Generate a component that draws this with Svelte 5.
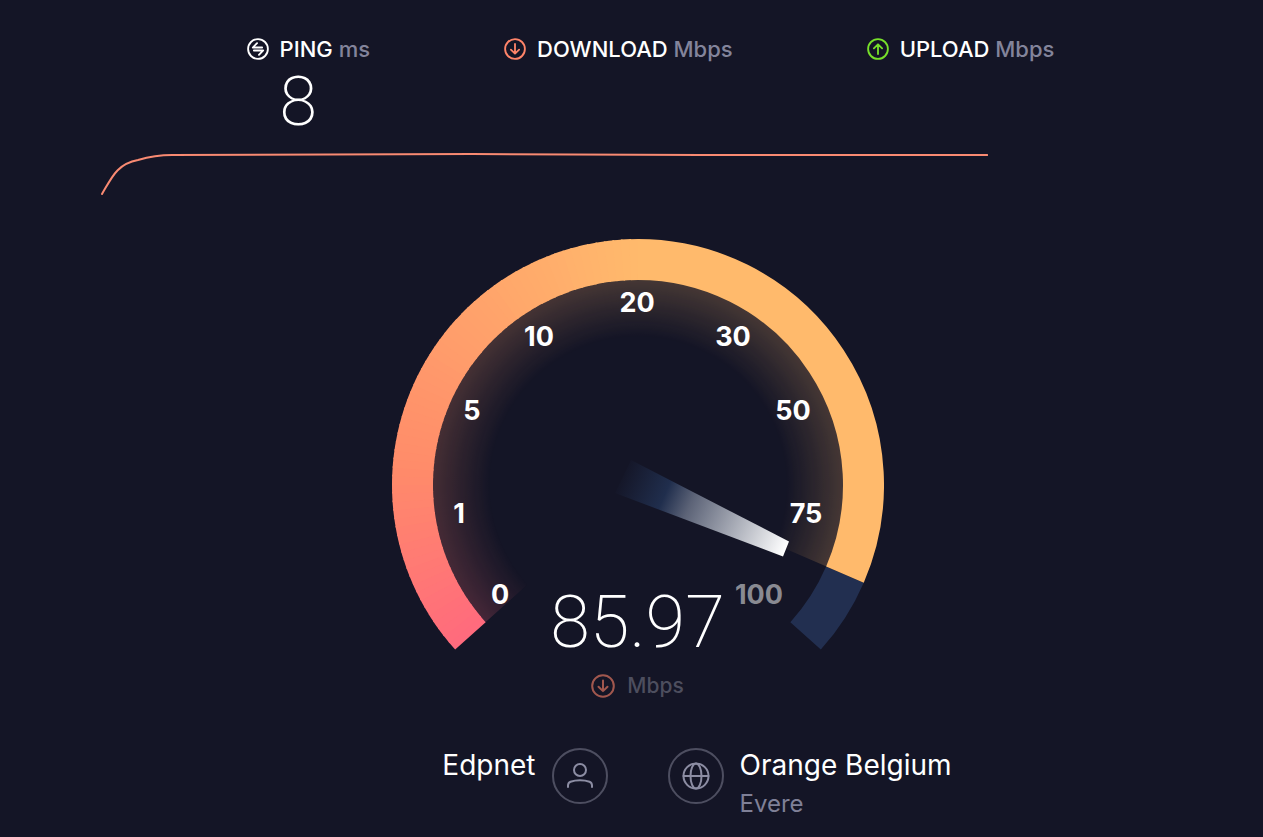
<script>
	const CX = 246;
	const CY = 246;
	const START = 138;
	const NEEDLE = 383.4;
	const END = 402;

	const stats = [
		{ id: 'ping', name: 'PING', unit: 'ms', value: '8', icon: 'ping' },
		{ id: 'download', name: 'DOWNLOAD', unit: 'Mbps', value: '', icon: 'down' },
		{ id: 'upload', name: 'UPLOAD', unit: 'Mbps', value: '', icon: 'up' }
	];

	const ticks = [
		{ label: '0', x: 108, y: 365 },
		{ label: '1', x: 67, y: 284 },
		{ label: '5', x: 80, y: 181 },
		{ label: '10', x: 147, y: 107 },
		{ label: '20', x: 245, y: 73 },
		{ label: '30', x: 341, y: 107 },
		{ label: '50', x: 401, y: 181 },
		{ label: '75', x: 414, y: 284 },
		{ label: '100', x: 367, y: 365, off: true }
	];

	// colour stops by angle, clockwise from the gauge's start
	const stops = [
		{ at: 138, rgb: [255, 106, 125] },
		{ at: 184, rgb: [255, 139, 106] },
		{ at: 225, rgb: [255, 161, 107] },
		{ at: 270, rgb: [255, 186, 108] }
	];

	function colorAt(angle) {
		for (let i = 1; i < stops.length; i++) {
			const a = stops[i - 1];
			const b = stops[i];
			if (angle <= b.at) {
				const t = (angle - a.at) / (b.at - a.at);
				return `rgb(${a.rgb.map((c, k) => Math.round(c + (b.rgb[k] - c) * t)).join(',')})`;
			}
		}
		return 'rgb(255,186,108)';
	}

	function point(angle, r) {
		const rad = (angle * Math.PI) / 180;
		return `${(CX + r * Math.cos(rad)).toFixed(2)} ${(CY + r * Math.sin(rad)).toFixed(2)}`;
	}

	function arc(from, to, r) {
		return `M${point(from, r)} A${r} ${r} 0 ${to - from > 180 ? 1 : 0} 1 ${point(to, r)}`;
	}

	// short arcs up to the top, then one solid arc to the needle
	const slices = [];
	for (let a = START; a < 270; a += 2) {
		slices.push({ from: a, to: a + 2.4, color: colorAt(a + 1) });
	}
	slices.push({ from: 270, to: NEEDLE, color: colorAt(270) });
</script>

{#snippet icon(kind)}
	<svg class="icon {kind}" viewBox="0 0 24 24" aria-hidden="true">
		<circle cx="12" cy="12" r="10.8" />
		{#if kind === 'down'}
			<path d="M12 6.5v10.5M7.5 12.7l4.5 4.4 4.5-4.4" />
		{:else if kind === 'up'}
			<path d="M12 17.5V7M7.5 11.3L12 6.9l4.5 4.4" />
		{:else}
			<path d="M16.5 10.4H6.3L11 5.6M7.5 13.600h10.200L13 18.400" />
		{/if}
	</svg>
{/snippet}

<main>
	<header class="stats">
		{#each stats as stat (stat.id)}
			<section class="stat">
				{@render icon(stat.icon)}
				<h2>{stat.name} <span>{stat.unit}</span></h2>
				{#if stat.value}
					<div class="stat-value">{stat.value}</div>
				{/if}
			</section>
		{/each}
	</header>

	<svg class="history" viewBox="0 0 888 44" preserveAspectRatio="none" aria-hidden="true">
		<path d="M2 42 C12 25 17 12 38 8 Q55 3 72 3 L372 2 L600 3 L887 3" />
	</svg>

	<div class="gauge">
		<svg viewBox="0 0 492 462" role="img" aria-label="Download speed gauge">
			<defs>
				<radialGradient id="fade" gradientUnits="userSpaceOnUse" cx={CX} cy={CY} r="205">
					<stop offset="0.72" stop-color="#fff" stop-opacity="0" />
					<stop offset="0.86" stop-color="#fff" stop-opacity="0.1" />
					<stop offset="1" stop-color="#fff" stop-opacity="0.21" />
				</radialGradient>
				<mask id="glow" maskUnits="userSpaceOnUse" x="0" y="0" width="492" height="462">
					<circle cx={CX} cy={CY} r="206" fill="url(#fade)" />
				</mask>
				<linearGradient id="needle" gradientUnits="userSpaceOnUse" x1="228" y1="236" x2="394" y2="309">
					<stop offset="0" stop-color="#202e4d" stop-opacity="0" />
					<stop offset="0.27" stop-color="#202e4d" />
					<stop offset="0.42" stop-color="#5c6377" />
					<stop offset="1" stop-color="#fff" />
				</linearGradient>
			</defs>

			<g mask="url(#glow)">
				{#each slices as s}
					<path class="inner" d={arc(s.from, s.to, 177)} stroke={s.color} />
				{/each}
			</g>
			<path class="ring rest" d={arc(NEEDLE, END, 225.5)} />
			{#each slices as s}
				<path class="ring" d={arc(s.from, s.to, 225.5)} stroke={s.color} />
			{/each}

			<path d="M239 221L397 302.500L391 317.500L223 254Z" fill="url(#needle)" />

			{#each ticks as tick}
				<text class:off={tick.off} x={tick.x} y={tick.y}>{tick.label}</text>
			{/each}
		</svg>

		<div class="readout">
			<div class="speed">85.97</div>
			<div class="unit">
				{@render icon('down')}
				<span>Mbps</span>
			</div>
		</div>
	</div>

	<footer>
		<div class="party client">
			<div class="name">Edpnet</div>
			<svg class="badge" viewBox="0 0 56 56" aria-hidden="true">
				<circle class="rim" cx="28" cy="28" r="27" />
				<circle cx="28" cy="22" r="6" />
				<path d="M16 39v-1.500c0-2 1-3.200 2.500-3.800 5.400-2 13.600-2 19 0 1.500.6 2.500 1.800 2.500 3.800V39" />
			</svg>
		</div>
		<div class="party server">
			<svg class="badge" viewBox="0 0 56 56" aria-hidden="true">
				<circle class="rim" cx="28" cy="28" r="27" />
				<circle cx="28" cy="28" r="12.500" />
				<ellipse cx="28" cy="28" rx="5.500" ry="12.500" />
				<path d="M15.500 28h25" />
			</svg>
			<div>
				<div class="name">Orange Belgium</div>
				<div class="place">Evere</div>
			</div>
		</div>
	</footer>
</main>

<style>
	:global(body) {
		background: #141526;
	}

	main {
		box-sizing: border-box;
		padding: 36px 0 0 12px;
		color: #fff;
		font-family: Inter, 'Liberation Sans', sans-serif;
	}

	.stats {
		display: flex;
		justify-content: center;
		gap: 134px;
		height: 116px;
		padding-left: 26px;
	}

	.stat {
		display: grid;
		grid-template-columns: 22px auto;
		grid-template-rows: 26px auto;
		column-gap: 11px;
		align-items: center;
		align-content: start;
	}

	h2 {
		margin: 0;
		font-size: 22px;
		line-height: 26px;
		font-weight: 500;
		white-space: nowrap;
	}

	h2 span {
		color: #83849b;
	}

	.stat-value {
		grid-column: 2;
		font-family: Roboto, sans-serif;
		font-size: 68px;
		line-height: 80px;
		font-weight: 200;
	}

	.icon {
		display: block;
		width: 22px;
		height: 22px;
		overflow: visible;
		fill: none;
		stroke: #fff;
		stroke-width: 2;
		stroke-linecap: round;
		stroke-linejoin: round;
	}

	.icon.down {
		stroke: #ff8469;
	}

	.icon.up {
		stroke: #77e02a;
	}

	.history {
		display: block;
		width: 71%;
		height: 44px;
		margin-left: 88px;
		fill: none;
		stroke: #f98a72;
		stroke-width: 2;
	}

	.history path {
		vector-effect: non-scaling-stroke;
		stroke-linecap: round;
	}

	.gauge {
		position: relative;
		width: min(492px, 100%);
		margin: 43px auto 0;
	}

	.gauge > svg {
		display: block;
		width: 100%;
	}

	.ring {
		fill: none;
		stroke-width: 41;
	}

	.rest {
		stroke: #222f50;
	}

	.inner {
		fill: none;
		stroke-width: 58;
	}

	text {
		fill: #fff;
		font-size: 27px;
		font-weight: 700;
		text-anchor: middle;
	}

	text.off {
		fill: #898a92;
	}

	.readout {
		position: absolute;
		inset: auto 0 0;
		text-align: center;
	}

	.speed {
		font-family: Roboto, sans-serif;
		font-size: 72px;
		line-height: 76px;
		font-weight: 200;
	}

	.unit {
		display: flex;
		justify-content: center;
		align-items: center;
		gap: 12px;
		padding: 12px 0 2px;
		color: #4d4e5e;
		font-size: 21px;
		line-height: 26px;
		font-weight: 500;
	}

	.unit .icon {
		width: 24px;
		height: 24px;
		opacity: 0.6;
	}

	footer {
		display: grid;
		grid-template-columns: 1fr 1fr;
		gap: 60px;
		margin-top: 47px;
	}

	.party {
		display: flex;
		gap: 16px;
	}

	.client {
		justify-content: flex-end;
	}

	.name {
		font-size: 28px;
		line-height: 34px;
	}

	.place {
		margin-top: 8px;
		color: #7f8097;
		font-size: 24px;
		line-height: 28px;
	}

	.badge {
		flex: none;
		width: 56px;
		height: 56px;
		fill: none;
		stroke: #8c8da3;
		stroke-width: 2;
		stroke-linecap: round;
	}

	.rim {
		stroke: #4d4e60;
	}
</style>
